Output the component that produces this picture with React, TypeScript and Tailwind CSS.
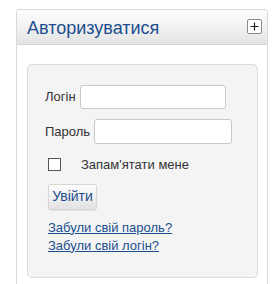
export default function App() {
  return (
    <div className="w-[274px] h-[284px] bg-white overflow-hidden font-['Liberation_Sans',Arial,sans-serif]">
      <div className="ml-[16px] mt-[9px] w-[252px] h-[290px] border border-[#dadada] rounded-t-[3px] bg-white">
        {/* header */}
        <div className="h-[35px] flex items-center justify-between pl-[10px] pr-[5px] bg-gradient-to-b from-[#fefefe] to-[#e4e4e4] border-b border-[#d6d6d6] rounded-t-[3px]">
          <h3 className="text-[18px] leading-none text-[#1b4f8f] mt-[1px]">Авторизуватися</h3>
          <button className="w-[15px] h-[15px] mb-[1px] border border-[#8a8a8a] rounded-[2px] bg-white flex items-center justify-center text-[#222]">
            <svg width="9" height="9" viewBox="0 0 9 9">
              <path d="M4.5 0.5v8M0.5 4.5h8" stroke="#222" strokeWidth="1.2" />
            </svg>
          </button>
        </div>
        {/* body */}
        <div className="pt-[19px] pl-[10px] pr-[9px]">
          <div className="h-[214px] border border-[#dcdcdc] rounded-[5px] bg-[#f4f4f4] pt-[20px] pl-[17px] text-[13px] text-[#333]">
            <div className="flex items-center gap-[4px]">
              <label>Логін</label>
              <input className="w-[146px] h-[24px] border border-[#c8c8c8] rounded-[3px] bg-white" />
            </div>
            <div className="flex items-center gap-[4px] mt-[10px]">
              <label>Пароль</label>
              <input className="w-[138px] h-[25px] border border-[#c8c8c8] rounded-[3px] bg-white" />
            </div>
            <div className="flex items-center mt-[11px] pl-[3px]">
              <span className="w-[13px] h-[13px] border border-[#555] bg-white" />
              <span className="ml-[20px]">Запам'ятати мене</span>
            </div>
            <button className="mt-[9px] ml-[3px] w-[49px] h-[26px] border border-[#d6d6d6] rounded-[3px] bg-gradient-to-b from-[#fdfdfd] to-[#e2e2e2] text-[14px] text-[#1b4f8f] flex items-center justify-center shadow-[0_1px_1px_rgba(0,0,0,0.08)]">
              Увійти
            </button>
            <div className="mt-[9px] ml-[3px] flex flex-col leading-[18px]">
              <a href="#" className="text-[#1b4f8f] underline">Забули свій пароль?</a>
              <a href="#" className="text-[#1b4f8f] underline">Забули свій логін?</a>
            </div>
          </div>
        </div>
      </div>
    </div>
  );
}
